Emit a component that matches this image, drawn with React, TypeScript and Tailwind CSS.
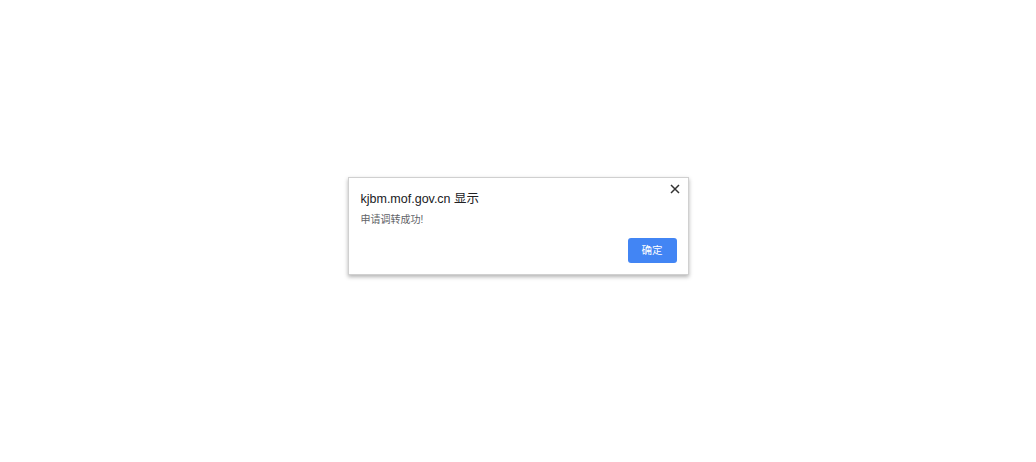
export default function App() {
  return (
    <div
      className="flex min-h-[462px] justify-center bg-white pt-[177px]"
      style={{ fontFamily: '"Liberation Sans", "Noto Sans CJK SC", sans-serif' }}
    >
      <div className="relative h-[98px] w-[341px] border border-[#d0d0d0] bg-white shadow-[0_2px_4px_rgba(0,0,0,0.3)]">
        <button className="absolute right-[8px] top-[6px] flex h-[10px] w-[10px] items-center justify-center">
          <svg width="10" height="10" viewBox="0 0 10 10">
            <path d="M1 1L9 9M9 1L1 9" stroke="#333" strokeWidth="1.5" />
          </svg>
        </button>
        <div className="px-3 pt-[11px]">
          <h1 className="text-[12.5px] leading-[20px] text-[#202124]">kjbm.mof.gov.cn 显示</h1>
          <p className="mt-[3px] text-[10px] leading-[16px] text-[#5f6368]">申请调转成功!</p>
        </div>
        <div className="absolute bottom-[11px] right-[11px]">
          <button className="h-[25px] w-[49px] rounded-[3px] bg-[#4285f4] text-[10.5px] text-white">
            确定
          </button>
        </div>
      </div>
    </div>
  );
}
